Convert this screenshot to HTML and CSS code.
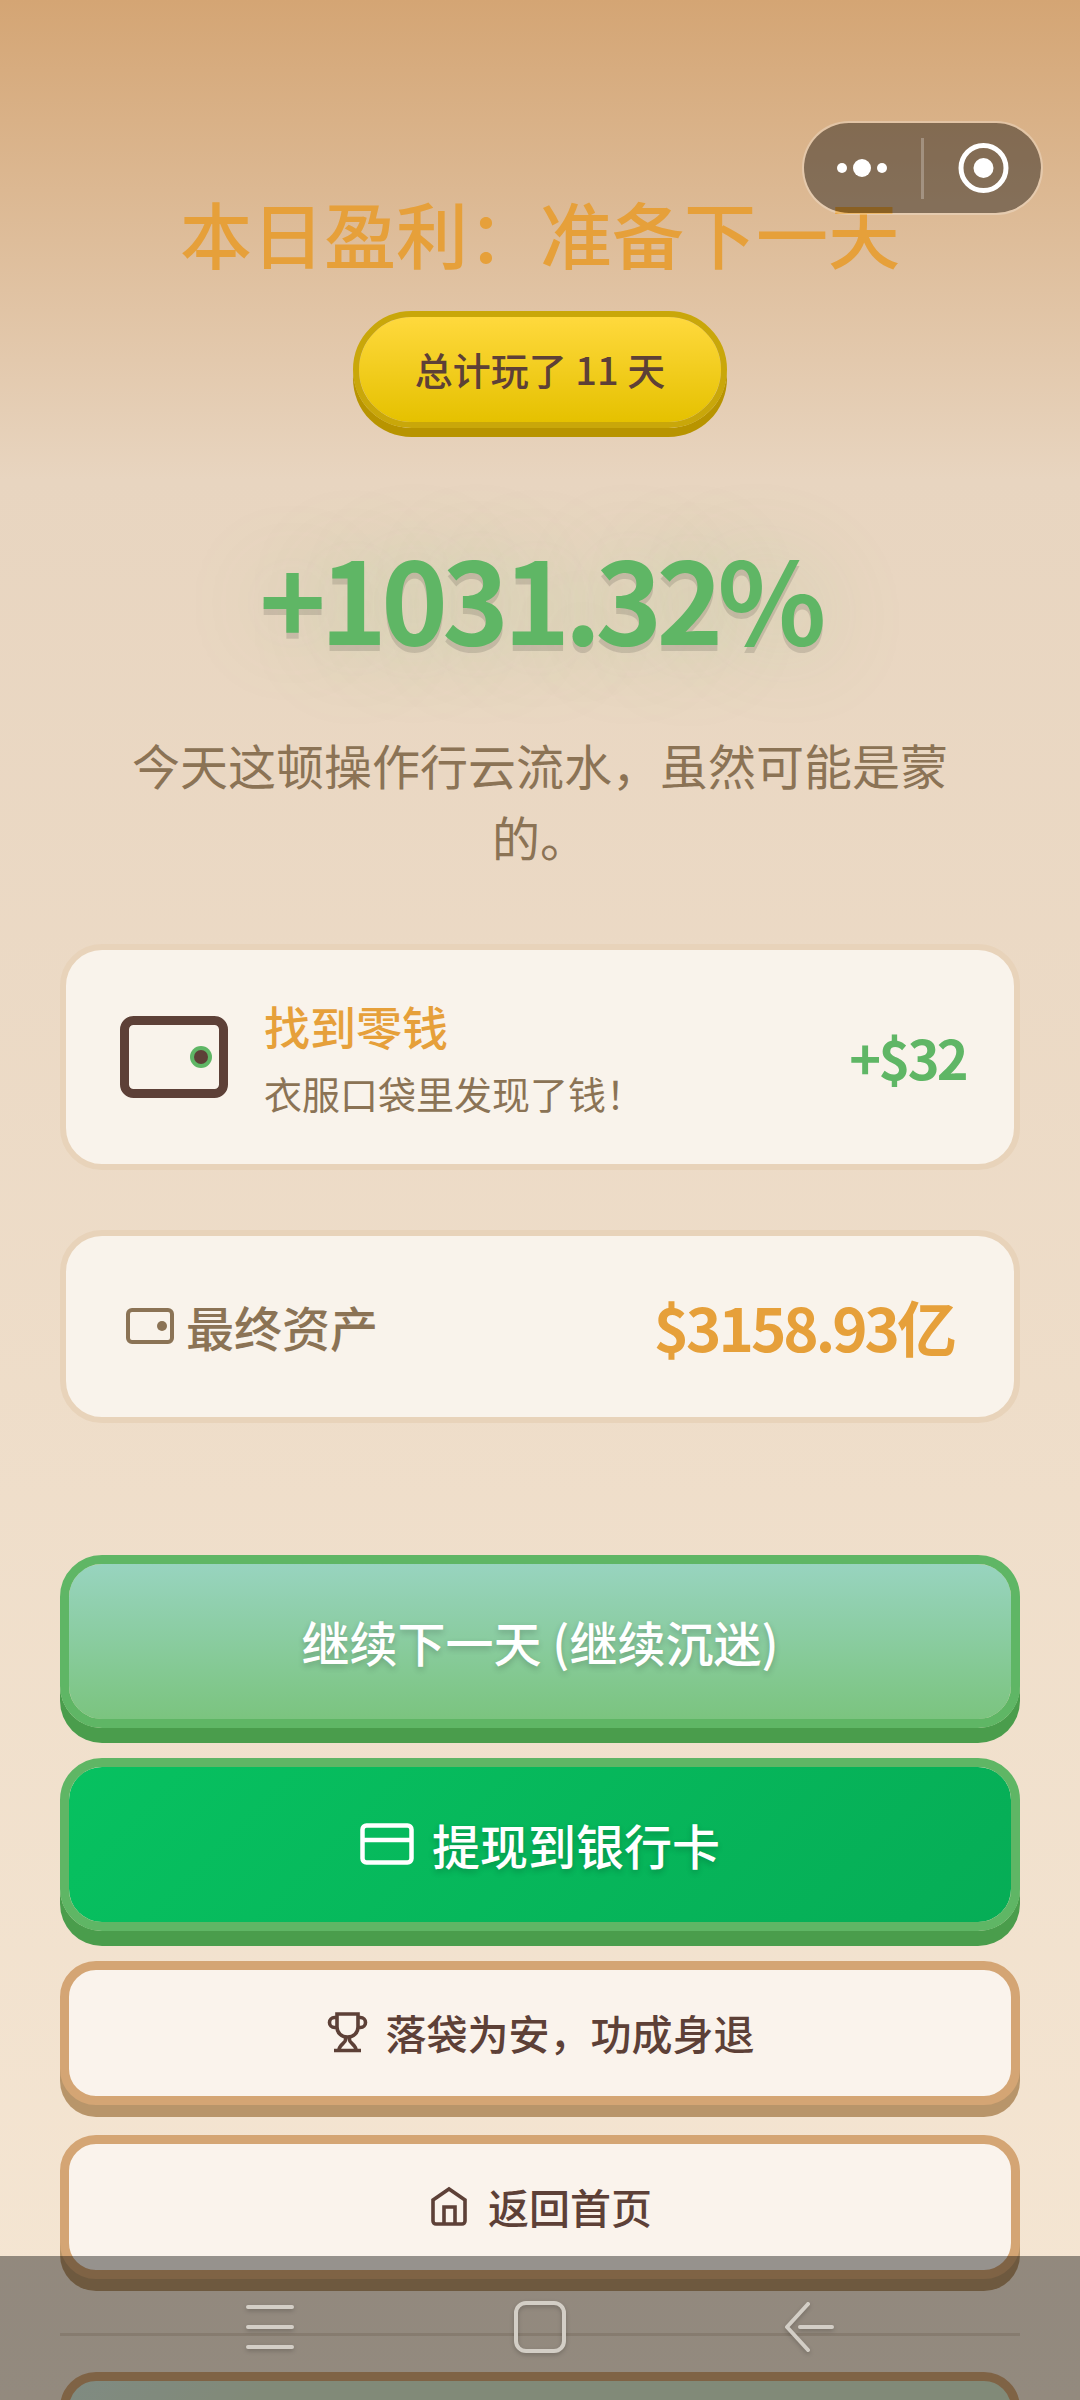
FILE: index.html
```html
<!DOCTYPE html>
<html lang="zh-CN">
<head>
  <meta charset="utf-8">
  <meta name="viewport" content="width=device-width, initial-scale=1">
  <title>本日盈利</title>
  <link rel="stylesheet" href="styles.css">
</head>
<body>
  <div class="app">
    <main class="result">
      <header class="summary">
        <h1 class="title">本日盈利：准备下一天</h1>
        <p class="days-badge">总计玩了 11 天</p>
        <p class="profit">+1031.32%</p>
        <p class="comment">今天这顿操作行云流水，虽然可能是蒙的。</p>
      </header>

      <section class="cards">
        <article class="card card-event">
          <svg class="icon-wallet" viewBox="0 0 108 82" aria-hidden="true">
            <rect x="4.5" y="4.5" width="99" height="73" rx="9" fill="none" stroke="#5d4037" stroke-width="9"/>
            <circle cx="81" cy="41" r="11" fill="#5fb665"/>
            <circle cx="81" cy="41" r="7" fill="#5d4037"/>
          </svg>
          <div class="event-text">
            <h2 class="event-title">找到零钱</h2>
            <p class="event-desc">衣服口袋里发现了钱！</p>
          </div>
          <strong class="event-amount">+$32</strong>
        </article>

        <article class="card card-assets">
          <span class="assets-label">
            <svg class="icon-small-wallet" viewBox="0 0 48 36" fill="none" aria-hidden="true">
              <rect x="2" y="2" width="44" height="32" rx="4" stroke="currentColor" stroke-width="4"/>
              <circle cx="36" cy="18" r="5" fill="currentColor"/>
            </svg>
            最终资产
          </span>
          <strong class="assets-value">$3158.93亿</strong>
        </article>
      </section>

      <div class="actions">
        <button class="btn btn-primary" type="button">继续下一天 (继续沉迷)</button>
        <button class="btn btn-primary btn-withdraw" type="button">
          <svg class="icon-card" viewBox="0 0 54 42" fill="none" stroke="currentColor" stroke-width="4.500" aria-hidden="true">
            <rect x="2.5" y="2.5" width="49" height="37" rx="4"/>
            <path d="M3 17H51"/>
          </svg>
          提现到银行卡
        </button>
        <button class="btn btn-plain" type="button">
          <svg class="icon-line" viewBox="0 0 42 42" fill="none" stroke="currentColor" stroke-width="3.600" aria-hidden="true">
            <path d="M11 3H32V16C32 22 27.500 26 21.500 26S11 22 11 16Z"/>
            <path d="M11 6.500H8.500A5 5 0 0 0 8.500 16.500H11M32 6.500H34.500A5 5 0 0 1 34.500 16.500H32"/>
            <path d="M19.500 26V29C19.500 32 13 34 13 39M23.500 26V29C23.500 32 30 34 30 39M8 39.500H35"/>
          </svg>
          落袋为安，功成身退
        </button>
        <button class="btn btn-plain" type="button">
          <svg class="icon-line" viewBox="0 0 42 42" fill="none" stroke="currentColor" stroke-width="3.600" aria-hidden="true">
            <path d="M5 15L21 4L37 15V36A3 3 0 0 1 34 39H8A3 3 0 0 1 5 36Z"/>
            <path d="M16 39V22H27V39"/>
          </svg>
          返回首页
        </button>
      </div>

      <div class="extra">
        <button class="btn btn-plain btn-mint" type="button" aria-label="更多"></button>
      </div>
    </main>

    <div class="capsule">
      <button class="capsule-btn" type="button" aria-label="菜单">
        <svg width="52" height="52" viewBox="0 0 52 52" fill="#fff" aria-hidden="true">
          <circle cx="5" cy="26" r="5"/><circle cx="25" cy="26" r="9"/><circle cx="45" cy="26" r="5"/>
        </svg>
      </button>
      <span class="capsule-divider"></span>
      <button class="capsule-btn" type="button" aria-label="关闭">
        <svg width="52" height="52" viewBox="0 0 52 52" aria-hidden="true">
          <circle cx="26.500" cy="26" r="22.500" fill="none" stroke="#fff" stroke-width="5"/>
          <circle cx="26.500" cy="26" r="10" fill="#fff"/>
        </svg>
      </button>
    </div>

    <nav class="system-nav">
      <button class="nav-btn" type="button" aria-label="最近任务">
        <svg class="nav-icon" viewBox="0 0 54 54"><path d="M5 7H49M5 27H49M5 47H49"/></svg>
      </button>
      <button class="nav-btn" type="button" aria-label="主屏幕">
        <svg class="nav-icon" viewBox="0 0 54 54"><rect x="3" y="3" width="48" height="48" rx="10"/></svg>
      </button>
      <button class="nav-btn" type="button" aria-label="返回">
        <svg class="nav-icon" viewBox="0 0 54 54"><path d="M25 4L4 27L25 50M17 27H49"/></svg>
      </button>
    </nav>
  </div>
</body>
</html>
```
FILE: styles.css
```css
:root {
  --brown: #5d4037;
  --muted: #8b7355;
  --orange: #e6a03a;
  --green: #5fb665;
  --tan: #d4a574;
  --cream: #f9f3eb;
}

* {
  box-sizing: border-box;
  margin: 0;
  padding: 0;
}

body {
  font-family: "Noto Sans CJK SC", "Noto Sans", sans-serif;
  font-size: 48px;
  color: var(--brown);
}

button {
  font: inherit;
  color: inherit;
  border: 0;
  background: none;
}

svg {
  display: block;
  flex: none;
}

.app {
  position: relative;
  height: 100vh;
  overflow: hidden;
  background: linear-gradient(180deg, #d4a574 0%, #e8d5c0 20%, #f5e6d3 100%);
}

.result {
  height: 100%;
  padding: 178px 60px 180px;
  overflow-y: auto;
  scrollbar-width: none;
}

/* Summary */
.summary {
  display: flex;
  flex-direction: column;
  align-items: center;
  text-align: center;
}

.title {
  font-size: 72px;
  line-height: 108px;
  font-weight: 500;
  color: var(--orange);
}

.days-badge {
  margin-top: 25px;
  padding: 23px 56px 25px;
  border: 6px solid #c9a70a;
  border-radius: 60px;
  background: linear-gradient(180deg, #ffd93d, #e5c100) padding-box;
  box-shadow: 0 9px 0 #b89400;
  font-size: 38px;
  line-height: 57px;
  font-weight: 500;
}

.profit,
.event-amount,
.assets-value {
  font-weight: 700;
  letter-spacing: -0.05em;
}

.profit {
  margin-top: 96px;
  font-size: 113px;
  line-height: 144px;
  color: var(--green);
  text-shadow: 0 6px 0 rgba(0, 0, 0, 0.12), 0 0 90px rgba(95, 182, 101, 0.3);
}

.comment {
  margin-top: 60px;
  padding: 0 60px;
  line-height: 72px;
  color: var(--muted);
}

/* Cards */
.cards {
  display: grid;
  gap: 60px;
  margin-top: 72px;
}

.card {
  display: flex;
  align-items: center;
  border: 6px solid #e8d3ba;
  border-radius: 42px;
  background: var(--cream);
}

.card-event {
  gap: 36px;
  padding: 42px 48px 42px 54px;
}

.icon-wallet {
  width: 108px;
  height: 82px;
}

.event-text {
  flex: 1;
}

.event-title {
  font-size: 46px;
  line-height: 66px;
  font-weight: 500;
  color: var(--orange);
}

.event-desc {
  margin-top: 6px;
  font-size: 38px;
  line-height: 58px;
  color: var(--muted);
}

.event-amount {
  font-size: 54px;
  line-height: 84px;
  color: var(--green);
}

.card-assets {
  justify-content: space-between;
  padding: 44px 60px 46px;
}

.assets-label {
  display: flex;
  align-items: center;
  gap: 12px;
  font-weight: 500;
  color: var(--muted);
}

.icon-small-wallet {
  width: 48px;
  height: 36px;
}

.assets-value {
  font-size: 60px;
  line-height: 91px;
  color: var(--orange);
}

/* Actions */
.actions {
  display: grid;
  gap: 30px;
  margin-top: 132px;
}

.btn {
  display: flex;
  align-items: center;
  justify-content: center;
  gap: 18px;
  width: 100%;
  padding-bottom: 2px;
  border-style: solid;
  border-width: 9px;
  font-weight: 500;
}

.btn-primary {
  min-height: 173px;
  border-color: var(--green);
  border-radius: 42px;
  background: linear-gradient(180deg, #98d4bf, #7bc47f) padding-box;
  box-shadow: 0 15px 0 #4a9d4c;
  color: #fff;
  text-shadow: 0 3px 6px rgba(0, 0, 0, 0.2);
}

.btn-withdraw {
  background: linear-gradient(135deg, #07c160, #06ad56) padding-box;
}

.btn-plain {
  min-height: 144px;
  border-color: var(--tan);
  border-radius: 36px;
  background: #faf3ec;
  box-shadow: 0 12px 0 #b8956a;
  font-size: 41px;
}

.icon-card {
  width: 54px;
  height: 42px;
}

.icon-line {
  width: 42px;
  height: 42px;
}

.extra {
  margin-top: 54px;
  padding-top: 36px;
  border-top: 3px solid rgba(139, 115, 85, 0.2);
}

.btn-mint {
  background: linear-gradient(135deg, #d4e8d8, #d8e6c8 20%);
}

/* Mini-program capsule */
.capsule {
  position: absolute;
  top: 121px;
  right: 37px;
  display: flex;
  align-items: center;
  width: 241px;
  height: 94px;
  border: 2px solid rgba(255, 255, 255, 0.25);
  border-radius: 47px;
  background: rgba(0, 0, 0, 0.4) padding-box;
}

.capsule-btn {
  display: flex;
  flex: 1;
  align-items: center;
  justify-content: center;
}

.capsule-divider {
  width: 3px;
  height: 61px;
  background: rgba(255, 255, 255, 0.25);
}

/* System navigation */
.system-nav {
  position: absolute;
  right: 0;
  bottom: 0;
  left: 0;
  display: flex;
  height: 144px;
  padding: 0 12.5% 2px;
  background: rgba(0, 0, 0, 0.4);
}

.nav-btn {
  display: flex;
  flex: 1;
  align-items: center;
  justify-content: center;
}

.nav-icon {
  width: 54px;
  height: 54px;
  fill: none;
  stroke: #d3cec6;
  stroke-width: 4;
  stroke-linecap: round;
  stroke-linejoin: round;
  filter: drop-shadow(0 2px 2px rgba(0, 0, 0, 0.2));
}
```
